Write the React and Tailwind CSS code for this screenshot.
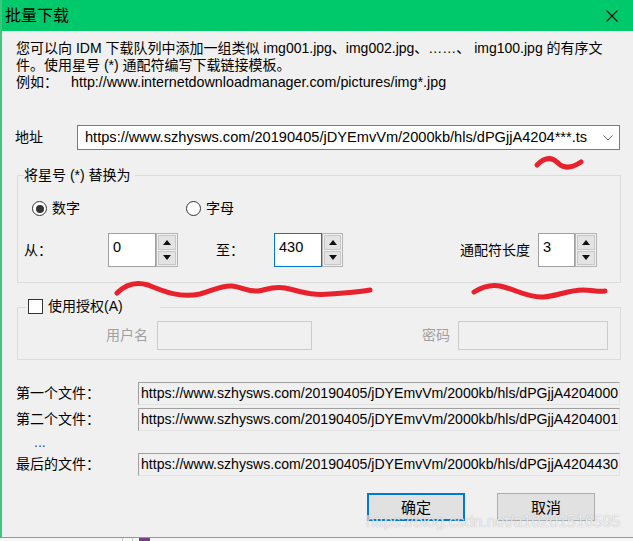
import React from "react";

const URL = "https://www.szhysws.com/20190405/jDYEmvVm/2000kb/hls/dPGjjA4204";

function Triangle({ up }) {
  return (
    <svg width="8" height="5" viewBox="0 0 8 5">
      <path d={up ? "M0 5 L4 0 L8 5 Z" : "M0 0 L4 5 L8 0 Z"} fill="#111" />
    </svg>
  );
}

function SpinBox({ value, editW, spinW, focused }) {
  return (
    <div className="flex h-[34px]">
      <div
        className={`${editW} h-full border bg-white pl-[4px] pt-[5px] text-[14.5px] leading-[17px] ${
          focused ? "border-[#0078d7]" : "border-[#a0a0a0]"
        }`}
      >
        {value}
      </div>
      <div className={`${spinW} flex h-full flex-col gap-[1px] border border-[#b4b4b4] bg-[#f0f0f0] p-[1px]`}>
        <div className="flex flex-1 items-center justify-center border border-[#c8c8c8] bg-[#e3e3e3]">
          <Triangle up />
        </div>
        <div className="flex flex-1 items-center justify-center border border-[#c8c8c8] bg-[#e3e3e3]">
          <Triangle />
        </div>
      </div>
    </div>
  );
}

function Radio({ checked, label, w }) {
  return (
    <div className={`flex items-center gap-[5px] ${w}`}>
      <span className="flex h-[15px] w-[15px] items-center justify-center rounded-full border border-[#333] bg-white">
        {checked && <span className="h-[8px] w-[8px] rounded-full bg-[#333]" />}
      </span>
      <span>{label}</span>
    </div>
  );
}

function FileRow({ label, suffix, className }) {
  return (
    <div className={`flex h-[23px] items-center ${className}`}>
      <span className="w-[136px] pl-[14px]">{label}</span>
      <div className="flex h-full w-[482px] items-center overflow-hidden whitespace-nowrap border border-[#a0a0a0] border-b-[#e3e3e3] border-r-[#e3e3e3] bg-[#f0f0f0] pl-[2px] text-[14.1px]">
        {URL + suffix}
      </div>
    </div>
  );
}

export default function App() {
  return (
    <div className="relative h-[541px] w-[633px] overflow-hidden bg-[#f0f0f0] text-[14px] leading-[17px] text-black [font-family:'Liberation_Sans','Noto_Sans_CJK_SC',sans-serif]">
      <div className="h-[538px] border-b border-l-2 border-[#3cc77c]">
        {/* title bar */}
        <div className="flex h-[31px] items-center justify-between bg-[#00c96b] pl-[3px] pr-[15px]">
          <span className="text-[16px]">批量下载</span>
          <svg width="12" height="12" viewBox="0 0 12 12">
            <path d="M0.5 0.5 L11.5 11.5 M11.5 0.5 L0.5 11.5" stroke="#111" strokeWidth="1.1" />
          </svg>
        </div>

        {/* description */}
        <div className="mt-[9px] pl-[14px]">
          <div className="whitespace-nowrap">
            您可以向 IDM 下载队列中添加一组类似 img001.jpg、img002.jpg、……、 img100.jpg 的有序文
          </div>
          <div className="whitespace-nowrap">件。使用星号 (*) 通配符编写下载链接模板。</div>
          <div className="flex whitespace-nowrap">
            <span className="w-[55px]">例如：</span>
            <span className="text-[14.3px]">http://www.internetdownloadmanager.com/pictures/img*.jpg</span>
          </div>
        </div>

        {/* address */}
        <div className="mt-[34px] flex h-[25px] items-center">
          <span className="w-[75px] pl-[13px]">地址</span>
          <div className="flex h-full w-[543px] items-center justify-between border border-[#7a7a7a] bg-white pl-[7px] pr-[6px] text-[14.6px]">
            <span className="whitespace-nowrap">{URL}***.ts</span>
            <svg width="10" height="6" viewBox="0 0 10 6">
              <path d="M0.5 0.5 L5 5 L9.5 0.5" stroke="#666" fill="none" strokeWidth="1" />
            </svg>
          </div>
        </div>

        {/* replace group */}
        <div className="relative ml-[15px] mt-[25px] h-[108px] w-[604px] border border-[#dcdcdc]">
          <span className="absolute left-[6px] top-[-9px] bg-[#f0f0f0] pr-[4px]">将星号 (*) 替换为</span>
          <div className="mt-[24px] flex h-[17px] items-center pl-[14px]">
            <Radio checked label="数字" w="w-[154px]" />
            <Radio label="字母" />
          </div>
          <div className="mt-[16px] flex h-[34px] items-center">
            <span className="w-[90px] pl-[6px]">从：</span>
            <SpinBox value="0" editW="w-[48px]" spinW="w-[22px]" />
            <span className="ml-[38px] w-[58px]">至：</span>
            <SpinBox value="430" editW="w-[48px]" spinW="w-[21px]" focused />
            <span className="ml-[117px] w-[78px]">通配符长度</span>
            <SpinBox value="3" editW="w-[37px]" spinW="w-[22px]" />
          </div>
        </div>

        {/* auth group */}
        <div className="relative ml-[15px] mt-[24px] h-[53px] w-[604px] border border-[#dcdcdc]">
          <div className="absolute left-[8px] top-[-10px] flex h-[17px] w-[134px] items-center gap-[5px] bg-[#f0f0f0] pl-[2px]">
            <span className="h-[15px] w-[15px] border border-[#333] bg-white" />
            <span>使用授权(A)</span>
          </div>
          <div className="mt-[13px] flex h-[29px] items-center pl-[88px] text-[#a0a0a0]">
            <span className="w-[51px]">用户名</span>
            <div className="h-full w-[155px] border border-[#cccccc] bg-[#f0f0f0]" />
            <span className="ml-[110px] w-[36px]">密码</span>
            <div className="h-full w-[150px] border border-[#cccccc] bg-[#f0f0f0]" />
          </div>
        </div>

        {/* files */}
        <FileRow className="mt-[22px]" label="第一个文件：" suffix="000" />
        <FileRow className="mt-[3px]" label="第二个文件：" suffix="001" />
        <div className="h-[22px] pl-[32px] pt-[3px] text-[#1f4f9f]">...</div>
        <FileRow label="最后的文件：" suffix="430" />

        {/* buttons */}
        <div className="mt-[17px] flex pl-[365px] text-[15px]">
          <button className="flex h-[28px] w-[98px] items-center justify-center border-2 border-[#0078d7] bg-[#e1e1e1]">
            确定
          </button>
          <button className="ml-[32px] flex h-[28px] w-[98px] items-center justify-center border border-[#adadad] bg-[#e1e1e1]">
            取消
          </button>
        </div>
      </div>

      {/* window behind the dialog */}
      <div className="flex h-[3px] bg-[#f7f7f7]">
        <span className="ml-[122px] h-full w-px bg-[#c8c8c8]" />
        <span className="ml-[9px] h-full w-px bg-[#c8c8c8]" />
        <span className="ml-[6px] h-full w-[11px] bg-[#7a3a8a]" />
      </div>

      {/* red hand-drawn marks */}
      <svg className="pointer-events-none absolute inset-0" width="633" height="541">
        <g stroke="#e8212c" strokeWidth="5" fill="none" strokeLinecap="round">
          <path d="M537 165 C545 157 552 157 558 163 C564 169 572 168 581 162" />
          <path d="M117 293 C125 285 135 281 148 285 C165 292 180 298 200 294 C212 291 222 285 232 286 C242 287 248 292 258 291 C266 290 272 286 285 288 C300 291 310 296 330 294 C345 293 360 292 370 290" />
          <path d="M474 292 C482 287 490 284 500 286 C515 289 528 298 543 297 C558 296 568 290 583 290 C592 290 598 292 605 291" />
        </g>
      </svg>

      {/* watermark */}
      <div className="pointer-events-none absolute left-[366px] top-[512px] whitespace-nowrap text-[16px] leading-[20px] text-white/80 [font-family:'Liberation_Sans',sans-serif] [text-shadow:0_0_1px_rgba(0,0,0,0.35)]">
        https://blog.csdn.net/a10201516595
      </div>
    </div>
  );
}
